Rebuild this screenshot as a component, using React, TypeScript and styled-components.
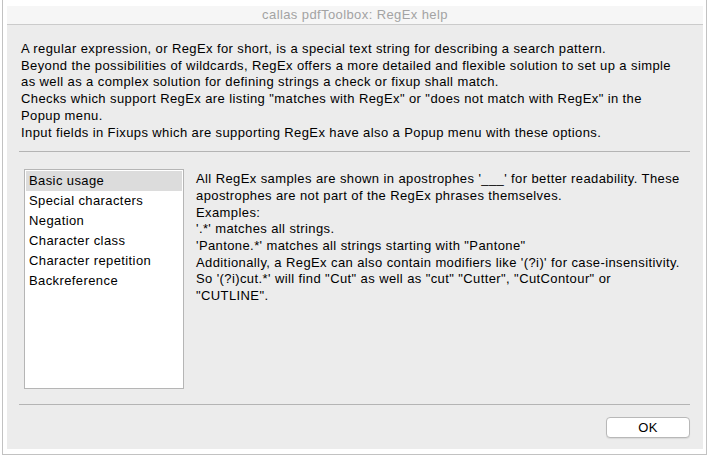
import React from 'react'
import styled, {createGlobalStyle} from 'styled-components'

const GlobalStyle = createGlobalStyle`
  html, body {
    margin: 0;
    padding: 0;
    background: #ffffff;
  }
  body {
    font-family: "Liberation Sans", Arial, Helvetica, sans-serif;
    font-size: 13px;
    letter-spacing: 0.4px;
    color: #000;
  }
`

const topics = [
  'Basic usage',
  'Special characters',
  'Negation',
  'Character class',
  'Character repetition',
  'Backreference',
]

const introLines = [
  'A regular expression, or RegEx for short, is a special text string for describing a search pattern.',
  'Beyond the possibilities of wildcards, RegEx offers a more detailed and flexible solution to set up a simple',
  'as well as a complex solution for defining strings a check or fixup shall match.',
  'Checks which support RegEx are listing "matches with RegEx" or "does not match with RegEx" in the',
  'Popup menu.',
  'Input fields in Fixups which are supporting RegEx have also a Popup menu with these options.',
]

const detailLines = [
  "All RegEx samples are shown in apostrophes '___' for better readability. These",
  'apostrophes are not part of the RegEx phrases themselves.',
  'Examples:',
  "'.*' matches all strings.",
  "'Pantone.*' matches all strings starting with \"Pantone\"",
  "Additionally, a RegEx can also contain modifiers like '(?i)' for case-insensitivity.",
  "So '(?i)cut.*' will find \"Cut\" as well as \"cut\" \"Cutter\", \"CutContour\" or",
  '"CUTLINE".',
]

export const App = () => {
  return (
    <>
      <GlobalStyle />
      <Frame>
        <Window>
          <TitleBar>callas pdfToolbox: RegEx help</TitleBar>
          <Body>
            <Intro>
              {introLines.map(line => <Line key={line}>{line}</Line>)}
            </Intro>
            <Separator />
            <Main>
              <TopicList>
                {topics.map((t, i) => (
                  <TopicItem key={t} selected={i === 0}>{t}</TopicItem>
                ))}
              </TopicList>
              <Detail>
                {detailLines.map(line => <Line key={line}>{line}</Line>)}
              </Detail>
            </Main>
            <Separator />
            <Footer>
              <OkButton>OK</OkButton>
            </Footer>
          </Body>
        </Window>
      </Frame>
    </>
  )
}

export default App

const Frame = styled.div`
  box-sizing: border-box;
  margin-left: 2px;
  width: 705px;
  height: 455px;
  padding: 6px 3px 5px 4px;
  border: 1px solid #c2c2c2;
  border-top: none;
`

const Window = styled.div`
  height: 100%;
  display: flex;
  flex-direction: column;
  background: #ececec;
`

const TitleBar = styled.div`
  height: 18px;
  line-height: 18px;
  background: #f6f6f6;
  border-bottom: 1px solid #cbcbcb;
  text-align: center;
  color: #a3a3a3;
  font-size: 13px;
`

const Body = styled.div`
  flex: 1;
  display: flex;
  flex-direction: column;
  padding: 16px 13px 0 12px;
`

const Intro = styled.div`
  padding-left: 2px;
  line-height: 16.7px;
`

const Line = styled.div`
  white-space: nowrap;
`

const Separator = styled.div`
  height: 1px;
  background: #b4b4b4;
  margin-top: 10px;
`

const Main = styled.div`
  display: flex;
  gap: 12px;
  margin-top: 17px;
  margin-left: 5px;
  margin-bottom: 5px;
`

const TopicList = styled.div`
  box-sizing: border-box;
  width: 160px;
  height: 220px;
  padding: 1px;
  background: #fff;
  border: 1px solid #b5b5b5;
`

const TopicItem = styled.div<{selected?: boolean}>`
  height: 20px;
  line-height: 20px;
  padding-left: 3px;
  background: ${p => (p.selected ? '#dcdcdc' : 'transparent')};
`

const Detail = styled.div`
  line-height: 16.7px;
  margin-top: 2px;
`

const Footer = styled.div`
  display: flex;
  justify-content: flex-end;
  margin-top: 12px;
`

const OkButton = styled.button`
  box-sizing: border-box;
  width: 84px;
  height: 21px;
  padding: 0;
  background: #fff;
  border: 1px solid #b8b8b8;
  border-radius: 4px;
  box-shadow: 0 1px 1px rgba(0, 0, 0, 0.08);
  font-family: "Liberation Sans", Arial, sans-serif;
  font-size: 13px;
  letter-spacing: 0.4px;
  color: #000;
`
